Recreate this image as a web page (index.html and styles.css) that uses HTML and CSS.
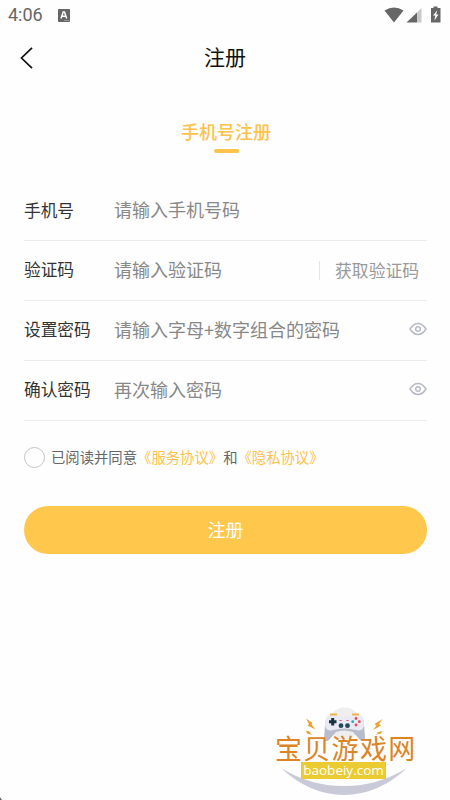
FILE: index.html
```html
<!DOCTYPE html>
<html lang="zh-CN">
<head>
<meta charset="utf-8">
<title>注册</title>
<link rel="stylesheet" href="styles.css">
</head>
<body>
<div class="screen">
  <div class="statusbar">
    <span class="clock">4:06</span>
    <svg class="ime" viewBox="0 0 12 13"><rect width="12" height="13" rx="1" fill="#666"/><path d="M3 9.5 5.2 3h1.3L8.7 9.5M3.9 7.3h3.9" fill="none" stroke="#fff" stroke-width="1.5"/><path d="M6 11.5h5" stroke="#aaa" stroke-width=".7"/></svg>
    <svg class="signals" viewBox="0 0 60 18"><path d="M2.500 4.500Q12-1.500 21.500 4.500L12 16.500Z" fill="#666"/><path d="M24.500 16.500 35 6.500V16.500Z" fill="#666"/><path d="M35 6.500 39.500 2V16.500H35Z" fill="#c9c9c9"/><path d="M51.500 .5h4V2h3v14.500H49V2H51.500Z" fill="#666"/><path d="M55.300 4.200 51 9.500h2.300l-.9 5 4.100-6h-2.400Z" fill="#fff"/></svg>
  </div>
  <header class="navbar">
    <svg class="back" viewBox="0 0 14 24"><path d="M12 1.800 1.500 12 12 22.200" fill="none" stroke="#111" stroke-width="1.700"/></svg>
    <h1 class="title">注册</h1>
  </header>
  <div class="tab">手机号注册</div>
  <form class="form">
    <div class="row"><span class="label">手机号</span><span class="hint">请输入手机号码</span></div>
    <div class="row"><span class="label">验证码</span><span class="hint">请输入验证码</span><span class="getcode">获取验证码</span></div>
    <div class="row"><span class="label">设置密码</span><span class="hint">请输入字母+数字组合的密码</span>
      <svg class="eye" viewBox="0 0 18 14"><path d="M1 7Q4.500 1.500 9 1.500T17 7Q13.500 12.500 9 12.500T1 7Z"/><circle cx="9" cy="7" r="2.300"/></svg></div>
    <div class="row"><span class="label">确认密码</span><span class="hint">再次输入密码</span>
      <svg class="eye" viewBox="0 0 18 14"><path d="M1 7Q4.500 1.500 9 1.500T17 7Q13.500 12.500 9 12.500T1 7Z"/><circle cx="9" cy="7" r="2.300"/></svg></div>
    <div class="agree"><span class="radio"></span><span class="terms">已阅读并同意<a>《服务协议》</a>和<a>《隐私协议》</a></span></div>
    <div class="submit">注册</div>
  </form>
  <div class="watermark">
    <svg class="art" viewBox="0 0 144 92">
      <circle cx="69.500" cy="17.500" r="16" fill="#eee"/>
      <path d="M6 62Q35 80 69 80T132 62Q103 89 69 89T6 62Z" fill="#c9cad8"/>
      <path d="M56 10Q50 10 50 19L49 33Q50 37 54 34L61 26Q69 23 78 26L85 34Q90 37 90 31L89 18Q89 10 83 10Q70 13 56 10Z" fill="#b8bccb"/>
      <path d="M56 9Q50 9 50 18Q50 26 58 24Q69 21 81 24Q89 26 89 18Q89 9 83 9Q70 12 56 9Z" fill="#e9eaf3"/>
      <path d="M55 8.500h7M77 8.500h7" stroke="#efb251" stroke-width="1.800"/>
      <path d="M57.700 12v7.500M54 15.700h7.500" stroke="#173243" stroke-width="3"/>
      <circle cx="66" cy="19.700" r="2.400" fill="#24485b"/><circle cx="72.500" cy="19.700" r="2.400" fill="#24485b"/>
      <path d="M64.500 14.500h2M71.500 14.500h2" stroke="#d84b65" stroke-width="1.200"/>
      <circle cx="81" cy="12.500" r="1.400" fill="#e34d57"/><circle cx="81" cy="19" r="1.400" fill="#e34d57"/><circle cx="77.700" cy="15.700" r="1.400" fill="#28a7ba"/><circle cx="84.300" cy="15.700" r="1.400" fill="#e34d57"/>
      <path d="M31 12.500 37.500 17 36.500 18.500 40.500 23.500 32.500 19.500 34 18ZM107.500 13 99.500 18 101.500 19.500 98 24 106 19.500 104 18ZM31 24.500 35.500 26 35 27 37.500 29 32 27.500ZM107.500 25 102 26.500 103 27.500 100 29 106 27.500Z" fill="#e8a12d"/>
    </svg>
    <div class="brand">宝贝游戏网</div>
    <div class="site">baobeiy.com</div>
  </div>
  <svg class="corner" viewBox="0 0 2 3"><path d="M0 0 2 3H0Z" fill="#666"/></svg>
</div>
</body>
</html>
```
FILE: styles.css
```css
* { box-sizing: border-box; }
body { margin: 0; font-family: "Noto Sans CJK SC", sans-serif; }
.screen { position: relative; width: 450px; height: 800px; background: #fefefe; overflow: hidden; }
.statusbar { display: flex; align-items: center; height: 30px; padding: 0 8px 0 8px; }
.clock { width: 50px; font: 18px/30px Roboto, sans-serif; color: #666; }
.ime { width: 12px; height: 13px; }
.signals { width: 60px; height: 18px; margin-left: auto; }
.navbar { display: grid; grid-template-columns: 60px 1fr 60px; align-items: center; height: 54px; }
.back { width: 14px; height: 24px; margin: 1px 0 0 20px; }
.title { margin: 0; font-size: 21px; font-weight: 400; line-height: 52px; height: 54px; text-align: center; color: #111; }
.tab { display: flex; flex-direction: column; align-items: center; margin-top: 34px; height: 62px; font-size: 18px; font-weight: 500; line-height: 27px; color: #fcc24a; padding-left: 2px; }
.tab::after { content: ""; width: 25px; height: 4px; margin-top: 4px; border-radius: 2px; background: #fcc24a; }
.form { padding: 0 23px 0 24px; }
.row { display: flex; align-items: center; height: 60px; padding-bottom: 3px; border-bottom: 1px solid #ebebeb; }
.row:first-child { height: 61px; padding-bottom: 1px; }
.label { width: 90px; font-size: 16.7px; color: #333; }
.hint { font-size: 18px; color: #888; white-space: nowrap; }
.row:first-child .hint { padding-bottom: 1px; }
.getcode { position: relative; top: 1px; margin-left: auto; padding: 0 8px 0 15px; border-left: 1px solid #e5e5e5; font-size: 16.8px; line-height: 19px; color: #999; }
.eye { width: 18px; height: 14px; margin-left: auto; fill: none; stroke: #b8bac6; stroke-width: 1.5; }
.agree { display: flex; align-items: center; height: 73px; font-size: 14.35px; color: #666; }
.radio { width: 21px; height: 21px; margin-right: 6px; border: 1.5px solid #c4c4c4; border-radius: 50%; }
.terms { padding-bottom: 2px; }
.terms a { color: #fcc24a; }
.submit { height: 48px; margin-top: 12px; border-radius: 24px; background: #ffc84d; color: #fff; font-size: 17.8px; line-height: 47px; text-align: center; }
.watermark { position: absolute; left: 275px; top: 706px; width: 144px; height: 92px; }
.art { position: absolute; inset: 0; width: 144px; height: 92px; }
.brand { position: relative; margin-top: 28px; font-size: 27px; line-height: 28px; letter-spacing: 1.3px; color: #dc8426; white-space: nowrap; }
.site { position: relative; width: 85px; height: 17px; margin-left: 26px; background: #eacb32; color: #fff; font: 500 13.5px/16px "Open Sans", sans-serif; text-align: center; }
.corner { position: absolute; left: 0; bottom: 0; width: 2px; height: 3px; }
```
